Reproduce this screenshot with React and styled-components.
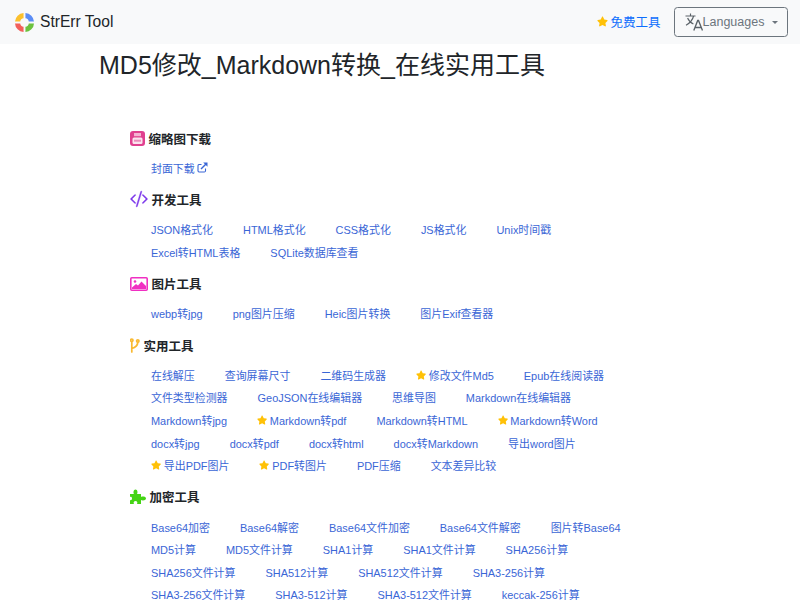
import styled, { createGlobalStyle } from "styled-components";
import { FaStar } from "react-icons/fa";
import { BsCodeSlash } from "react-icons/bs";

const GlobalStyle = createGlobalStyle`
    html, body {
        margin: 0;
        padding: 0;
        background: #fff;
        color: #212529;
        font-family: "Liberation Sans", "Noto Sans CJK SC", sans-serif;
        font-size: 12.5px;
    }
`

const NavBar = styled.header`
    height: 44px;
    background-color: #f8f9fa;
    display: flex;
    align-items: center;
    justify-content: space-between;
    padding: 0 12px 0 15px;
`

const Brand = styled.a`
    display: flex;
    align-items: center;
    gap: 6px;
    font-size: 15.625px;
    color: #212529;
`

const NavRight = styled.div`
    display: flex;
    align-items: center;
    gap: 13.5px;
`

const FreeLink = styled.a`
    display: flex;
    align-items: center;
    gap: 2.5px;
    padding-bottom: 2px;
    font-size: 12.5px;
    color: #0d6efd;
`

const StarIcon = styled(FaStar)`
    color: #ffc107;
    font-size: ${(p) => p.$size || 10.2}px;
    flex-shrink: 0;
`

const LangButton = styled.button`
    width: 114px;
    height: 30px;
    padding: 0 0 0 1px;
    display: flex;
    align-items: center;
    justify-content: center;
    border: 1px solid #6c757d;
    border-radius: 3.5px;
    background: transparent;
    color: #6c757d;
    font-family: inherit;
    font-size: 12.5px;

    &::after {
        content: "";
        margin-left: 8px;
        border-top: 3.5px solid #6c757d;
        border-left: 3.5px solid transparent;
        border-right: 3.5px solid transparent;
    }
`

const Main = styled.main`
    padding: 0 99px;
`

const Title = styled.h1`
    margin: 0;
    padding-top: 4px;
    font-size: 25px;
    line-height: 34px;
    font-weight: 400;
`

const Sections = styled.div`
    padding: 43px 50px 0 31px;
`

const Section = styled.section`
    margin-bottom: 7.4px;
`

const SectionTitle = styled.h5`
    margin: 0 0 7.5px;
    padding-top: 2px;
    box-sizing: border-box;
    display: flex;
    align-items: center;
    gap: 3.5px;
    height: 24px;
    font-size: 12.5px;
    font-weight: 700;
`

const Links = styled.div`
    display: flex;
    flex-wrap: wrap;
    column-gap: 30px;
    padding-left: 21px;
`

const ToolLink = styled.a`
    display: inline-flex;
    align-items: center;
    gap: 2.6px;
    height: 22.6px;
    font-size: 10.94px;
    color: #3a66d6;
`

const CodeIcon = styled(BsCodeSlash)`
    font-size: 18px;
    color: #7a35ea;
    stroke: currentColor;
    stroke-width: 0.4;
`

function LogoIcon() {
    return (
        <svg width="19" height="19" viewBox="0 0 20 20">
            <path d="M0 9A9.5 9.5 0 0 1 9 0V5.5A4 4 0 0 0 5.5 9Z" fill="#fbc02d" />
            <path d="M11 0A9.5 9.5 0 0 1 20 9H14.5A4 4 0 0 0 11 5.5Z" fill="#5c8df6" />
            <path d="M20 11A9.5 9.5 0 0 1 11 20V14.5A4 4 0 0 0 14.5 11Z" fill="#6cc13f" />
            <path d="M9 20A9.5 9.5 0 0 1 0 11H5.5A4 4 0 0 0 9 14.5Z" fill="#f2605b" />
        </svg>
    )
}

function LanguageIcon() {
    return (
        <svg width="18" height="18" viewBox="0 0 18 18" fill="none" stroke="#5a6268" strokeWidth="1.15">
            <path d="M0.5 3H10.5M5.5 0.5V3M8.6 3C7.6 7 5 10 1 12.2M2.6 5C3.8 8 5.8 9.8 8.4 11" />
            <path d="M8.8 17.5L12.7 7.5H13.5L17.5 17.5M10.2 14.5H16.2" strokeWidth="1.35" />
        </svg>
    )
}

function ExternalIcon() {
    return (
        <svg width="11" height="11" viewBox="0 0 11 11" fill="none" stroke="#3a66d6">
            <path d="M8.5 6.5V9A1.2 1.2 0 0 1 7.3 10H2A1.2 1.2 0 0 1 1 9V3.7A1.2 1.2 0 0 1 2 2.5H4.5" strokeWidth="1.1" />
            <path d="M4 7L9 2" strokeWidth="1.5" />
            <path d="M6.2 0.5H10.5V4.8Z" fill="#3a66d6" stroke="none" />
        </svg>
    )
}

function ThumbIcon() {
    return (
        <svg width="15" height="15" viewBox="0 0 15 15">
            <rect x="0" y="0" width="15" height="15" rx="3" fill="#e0408f" />
            <rect x="4" y="2" width="7" height="3.2" fill="#f4b3d2" />
            <rect x="2.5" y="6.5" width="10" height="6.5" rx="1.5" fill="#fbe3ee" />
            <rect x="4" y="8.7" width="7" height="2" fill="#eb8bbb" />
        </svg>
    )
}

function PictureIcon() {
    return (
        <svg width="18" height="14" viewBox="0 0 18 14">
            <rect x="0.8" y="0.8" width="16.4" height="12.4" rx="1" fill="#fff" stroke="#f02fc2" strokeWidth="1.6" />
            <path d="M2 12V10.5L6 7L8 8.5L11.5 4.5L16 9V12Z" fill="#f02fc2" />
            <circle cx="5" cy="4.5" r="1.3" fill="#f02fc2" />
        </svg>
    )
}

function ToolIcon() {
    return (
        <svg width="10" height="15" viewBox="0 0 10 15" fill="none" stroke="#f9b931" strokeWidth="1.7" strokeLinecap="round">
            <circle cx="1.8" cy="2.2" r="1.2" />
            <circle cx="7.8" cy="3" r="1.2" />
            <path d="M1.8 3.8V14M1.8 10.5C5.5 9.5 7.6 8 7.8 4.4" />
        </svg>
    )
}

function PuzzleIcon() {
    return (
        <svg width="16" height="15" viewBox="0 0 16 15">
            <path d="M0 5H4C3 3.5 3.5 0.5 5.5 0.5S8 3.5 7 5H11V8C12.5 7 16 7.5 16 9.5S12.5 12 11 11V15H7C8 13.5 7 12 5.5 12S3 13.5 4 15H0V11C1 11.5 2 11 2 9.5S1 7.5 0 8Z" fill="#44d414" />
        </svg>
    )
}

const sections = [
    {
        title: "缩略图下载",
        icon: <ThumbIcon />,
        links: [{ text: "封面下载", external: true }],
    },
    {
        title: "开发工具",
        icon: <CodeIcon />,
        links: ["JSON格式化", "HTML格式化", "CSS格式化", "JS格式化", "Unix时间戳", "Excel转HTML表格", "SQLite数据库查看"],
    },
    {
        title: "图片工具",
        icon: <PictureIcon />,
        links: ["webp转jpg", "png图片压缩", "Heic图片转换", "图片Exif查看器"],
    },
    {
        title: "实用工具",
        icon: <ToolIcon />,
        links: [
            "在线解压", "查询屏幕尺寸", "二维码生成器", { text: "修改文件Md5", star: true }, "Epub在线阅读器",
            "文件类型检测器", "GeoJSON在线编辑器", "思维导图", "Markdown在线编辑器",
            "Markdown转jpg", { text: "Markdown转pdf", star: true }, "Markdown转HTML", { text: "Markdown转Word", star: true },
            "docx转jpg", "docx转pdf", "docx转html", "docx转Markdown", "导出word图片",
            { text: "导出PDF图片", star: true }, { text: "PDF转图片", star: true }, "PDF压缩", "文本差异比较",
        ],
    },
    {
        title: "加密工具",
        icon: <PuzzleIcon />,
        links: [
            "Base64加密", "Base64解密", "Base64文件加密", "Base64文件解密", "图片转Base64",
            "MD5计算", "MD5文件计算", "SHA1计算", "SHA1文件计算", "SHA256计算",
            "SHA256文件计算", "SHA512计算", "SHA512文件计算", "SHA3-256计算",
            "SHA3-256文件计算", "SHA3-512计算", "SHA3-512文件计算", "keccak-256计算",
        ],
    },
]

function App() {
    return (
        <>
            <GlobalStyle />
            <NavBar>
                <Brand><LogoIcon />StrErr Tool</Brand>
                <NavRight>
                    <FreeLink><StarIcon $size={11} />免费工具</FreeLink>
                    <LangButton><LanguageIcon />Languages</LangButton>
                </NavRight>
            </NavBar>
            <Main>
                <Title>MD5修改_Markdown转换_在线实用工具</Title>
                <Sections>
                    {sections.map((section) => (
                        <Section key={section.title}>
                            <SectionTitle>{section.icon}{section.title}</SectionTitle>
                            <Links>
                                {section.links.map((link) => {
                                    const item = typeof link === "string" ? { text: link } : link
                                    return (
                                        <ToolLink key={item.text}>
                                            {item.star && <StarIcon />}
                                            {item.text}
                                            {item.external && <ExternalIcon />}
                                        </ToolLink>
                                    )
                                })}
                            </Links>
                        </Section>
                    ))}
                </Sections>
            </Main>
        </>
    )
}

export default App
